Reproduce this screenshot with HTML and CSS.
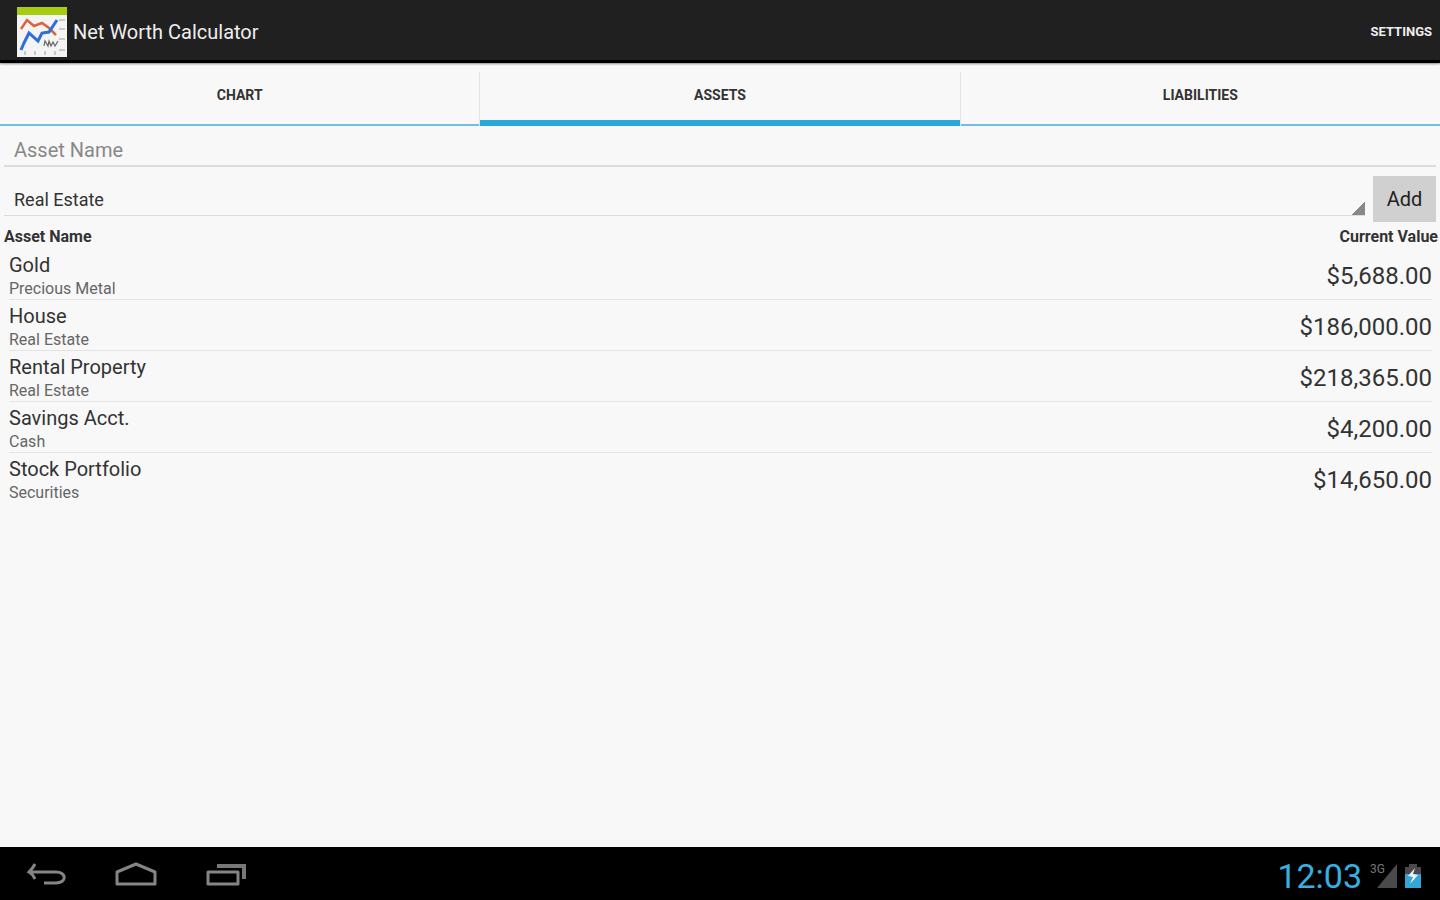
FILE: index.html
```html
<!DOCTYPE html>
<html lang="en">
<head>
    <meta charset="UTF-8">
    <title>Net Worth Calculator</title>
    <link rel="stylesheet" href="styles.css">
</head>
<body>
<header class="bar">
    <svg class="logo" viewBox="0 0 50 50">
        <rect width="50" height="50" fill="#f4f4f4"/>
        <rect width="50" height="8" fill="#a8cc10"/>
        <path d="M42 13h6M42 22h6M42 32h6M42 43h6M8 44v4M18 44v4M28 44v4M38 44v4" stroke="#bbb" stroke-width="1.5"/>
        <path d="M4 22l6-9 7 6 8-3 7 5 7 7" fill="none" stroke="#dc643c" stroke-width="2.5"/>
        <path d="M4 43l3-7 5-10 9 8 4-8 7-1 8-12" fill="none" stroke="#2d6fd6" stroke-width="3"/>
        <path d="M27 39l1-5 3 5 1-5 2 5 2-4 2 4 3-5" fill="none" stroke="#666" stroke-width="1.2"/>
    </svg>
    <h1>Net Worth Calculator</h1>
    <button class="settings" type="button">SETTINGS</button>
</header>
<nav class="tabs">
    <a href="#chart">CHART</a>
    <a href="#assets" class="active">ASSETS</a>
    <a href="#liabilities">LIABILITIES</a>
</nav>
<main>
    <form class="add-form">
        <input class="name" type="text" placeholder="Asset Name" aria-label="Asset Name">
        <div class="row">
            <select class="type" aria-label="Asset Type">
                <option>Real Estate</option>
                <option>Precious Metal</option>
                <option>Cash</option>
                <option>Securities</option>
            </select>
            <button class="add" type="button">Add</button>
        </div>
    </form>
    <table class="list">
        <thead>
        <tr><th>Asset Name</th><th>Current Value</th></tr>
        </thead>
        <tbody>
        <tr><td><b>Gold</b><small>Precious Metal</small></td><td>$5,688.00</td></tr>
        <tr><td><b>House</b><small>Real Estate</small></td><td>$186,000.00</td></tr>
        <tr><td><b>Rental Property</b><small>Real Estate</small></td><td>$218,365.00</td></tr>
        <tr><td><b>Savings Acct.</b><small>Cash</small></td><td>$4,200.00</td></tr>
        <tr><td><b>Stock Portfolio</b><small>Securities</small></td><td>$14,650.00</td></tr>
        </tbody>
    </table>
</main>
<footer class="system">
    <button type="button" aria-label="Back">
        <svg width="42" height="30" viewBox="0 0 42 30">
            <path d="M10 3C8 7 6 9 4 11c2 1 4 3 6 7M5 11h26c11 0 11 11 0 11H19" fill="none" stroke="#858585" stroke-width="3"/>
        </svg>
    </button>
    <button type="button" aria-label="Home">
        <svg width="42" height="30" viewBox="0 0 42 30">
            <path d="M2 23V11L21 3l19 8v12z" fill="none" stroke="#858585" stroke-width="3" stroke-linejoin="round"/>
        </svg>
    </button>
    <button type="button" aria-label="Recent apps">
        <svg width="42" height="30" viewBox="0 0 42 30">
            <path d="M3 11h30v12H3z" fill="none" stroke="#858585" stroke-width="3" stroke-linejoin="round"/>
            <path d="M12 5h27v13" fill="none" stroke="#777" stroke-width="4"/>
        </svg>
    </button>
    <div class="status">
        <span class="clock">12:03</span>
        <span class="net">3G</span>
        <svg class="signal" width="20" height="24" viewBox="0 0 20 24"><path d="M20 0v24H0z" fill="#4a4a4a"/></svg>
        <svg width="16" height="24" viewBox="0 0 16 24">
            <path d="M4 0h8v3h4v8H0V3h4z" fill="#4a4a4a"/>
            <path d="M0 10h16v14H0z" fill="#35a5d3"/>
            <path d="M10 4l-7 8 5 1-3 7 8-9-5-1z" fill="#e8f4f8"/>
        </svg>
    </div>
</footer>
</body>
</html>
```
FILE: styles.css
```css
*{
    margin: 0;
    padding: 0;
    box-sizing: border-box;
}
body{
    min-height: 100vh;
    display: flex;
    flex-direction: column;
    background: #f8f8f8;
    color: #333;
    font-family: Roboto, "Liberation Sans", sans-serif;
}
button,
input,
select{
    font-family: inherit;
    border: 0;
    background: none;
    color: inherit;
}
svg{
    display: block;
}
.bar{
    height: 63px;
    padding: 3px 8px 0 17px;
    display: flex;
    align-items: center;
    background: #202020;
    border-bottom: 3px solid #000;
    box-shadow: 0 1px 2px #888;
    color: #eee;
}
.logo{
    width: 50px;
    height: 50px;
    margin-right: 6px;
}
.bar h1{
    font-size: 20px;
    line-height: 24px;
    font-weight: 400;
}
.settings{
    margin-left: auto;
    font-size: 13px;
    font-weight: 700;
}
.tabs{
    height: 63px;
    padding-top: 9px;
    display: flex;
    gap: 1px;
}
.tabs a{
    flex: 1;
    padding-top: 15px;
    text-align: center;
    text-decoration: none;
    font-size: 14px;
    line-height: 16px;
    font-weight: 700;
    color: #333;
    border-bottom: 2px solid #6fbfe0;
    box-shadow: 1px 0 #e4e4e4;
}
.tabs a:last-child{
    box-shadow: none;
}
.tabs .active{
    border-bottom: 6px solid #29a9d9;
}
main{
    flex: 1;
}
.add-form{
    padding: 0 4px;
}
.name{
    display: block;
    width: 100%;
    height: 41px;
    padding: 8px 10px 0;
    font-size: 20px;
    border-bottom: 2px solid #dcdcdc;
}
.name::placeholder{
    color: #888;
}
.row{
    display: flex;
    gap: 8px;
    padding-top: 9px;
}
/* spinner triangle sits in the bottom right corner */
.type{
    flex: 1;
    height: 40px;
    padding: 8px 10px 0;
    appearance: none;
    font-size: 18px;
    border-bottom: 1px solid #dcdcdc;
    background: linear-gradient(135deg, transparent 50%, #888 50%) right bottom / 14px 14px no-repeat;
}
.add{
    width: 63px;
    height: 46px;
    background: #d0d0d0;
    font-size: 20px;
    color: #222;
}
.list{
    width: 100%;
    border-spacing: 0;
}
.list th{
    height: 27px;
    padding: 2px 2px 0 4px;
    text-align: left;
    font-size: 16px;
    font-weight: 700;
    line-height: 24px;
}
/* the divider stops short of both window edges */
.list td{
    height: 51px;
    padding: 2px 8px 0 9px;
    background: linear-gradient(#e4e4e4, #e4e4e4) 9px bottom / 100% 1px no-repeat;
    font-size: 24px;
}
.list td:last-child{
    background-position: -8px bottom;
}
.list tr:last-child td{
    background: none;
}
.list th:last-child,
.list td:last-child{
    text-align: right;
}
.list b,
.list small{
    display: block;
    font-weight: 400;
}
.list b{
    font-size: 20px;
    line-height: 26px;
}
.list small{
    font-size: 16px;
    line-height: 22px;
    color: #666;
}
.system{
    height: 53px;
    padding: 4px 19px 0 25px;
    display: flex;
    align-items: center;
    gap: 48px;
    background: #000;
}
.status{
    margin-left: auto;
    display: flex;
    align-items: center;
    gap: 8px;
}
.clock{
    font-size: 34px;
    line-height: 40px;
    color: #35b1e1;
}
.net{
    align-self: flex-start;
    padding-top: 6px;
    font-size: 12px;
    line-height: 14px;
    color: #777;
}
.signal{
    margin-left: -16px;
}
```
